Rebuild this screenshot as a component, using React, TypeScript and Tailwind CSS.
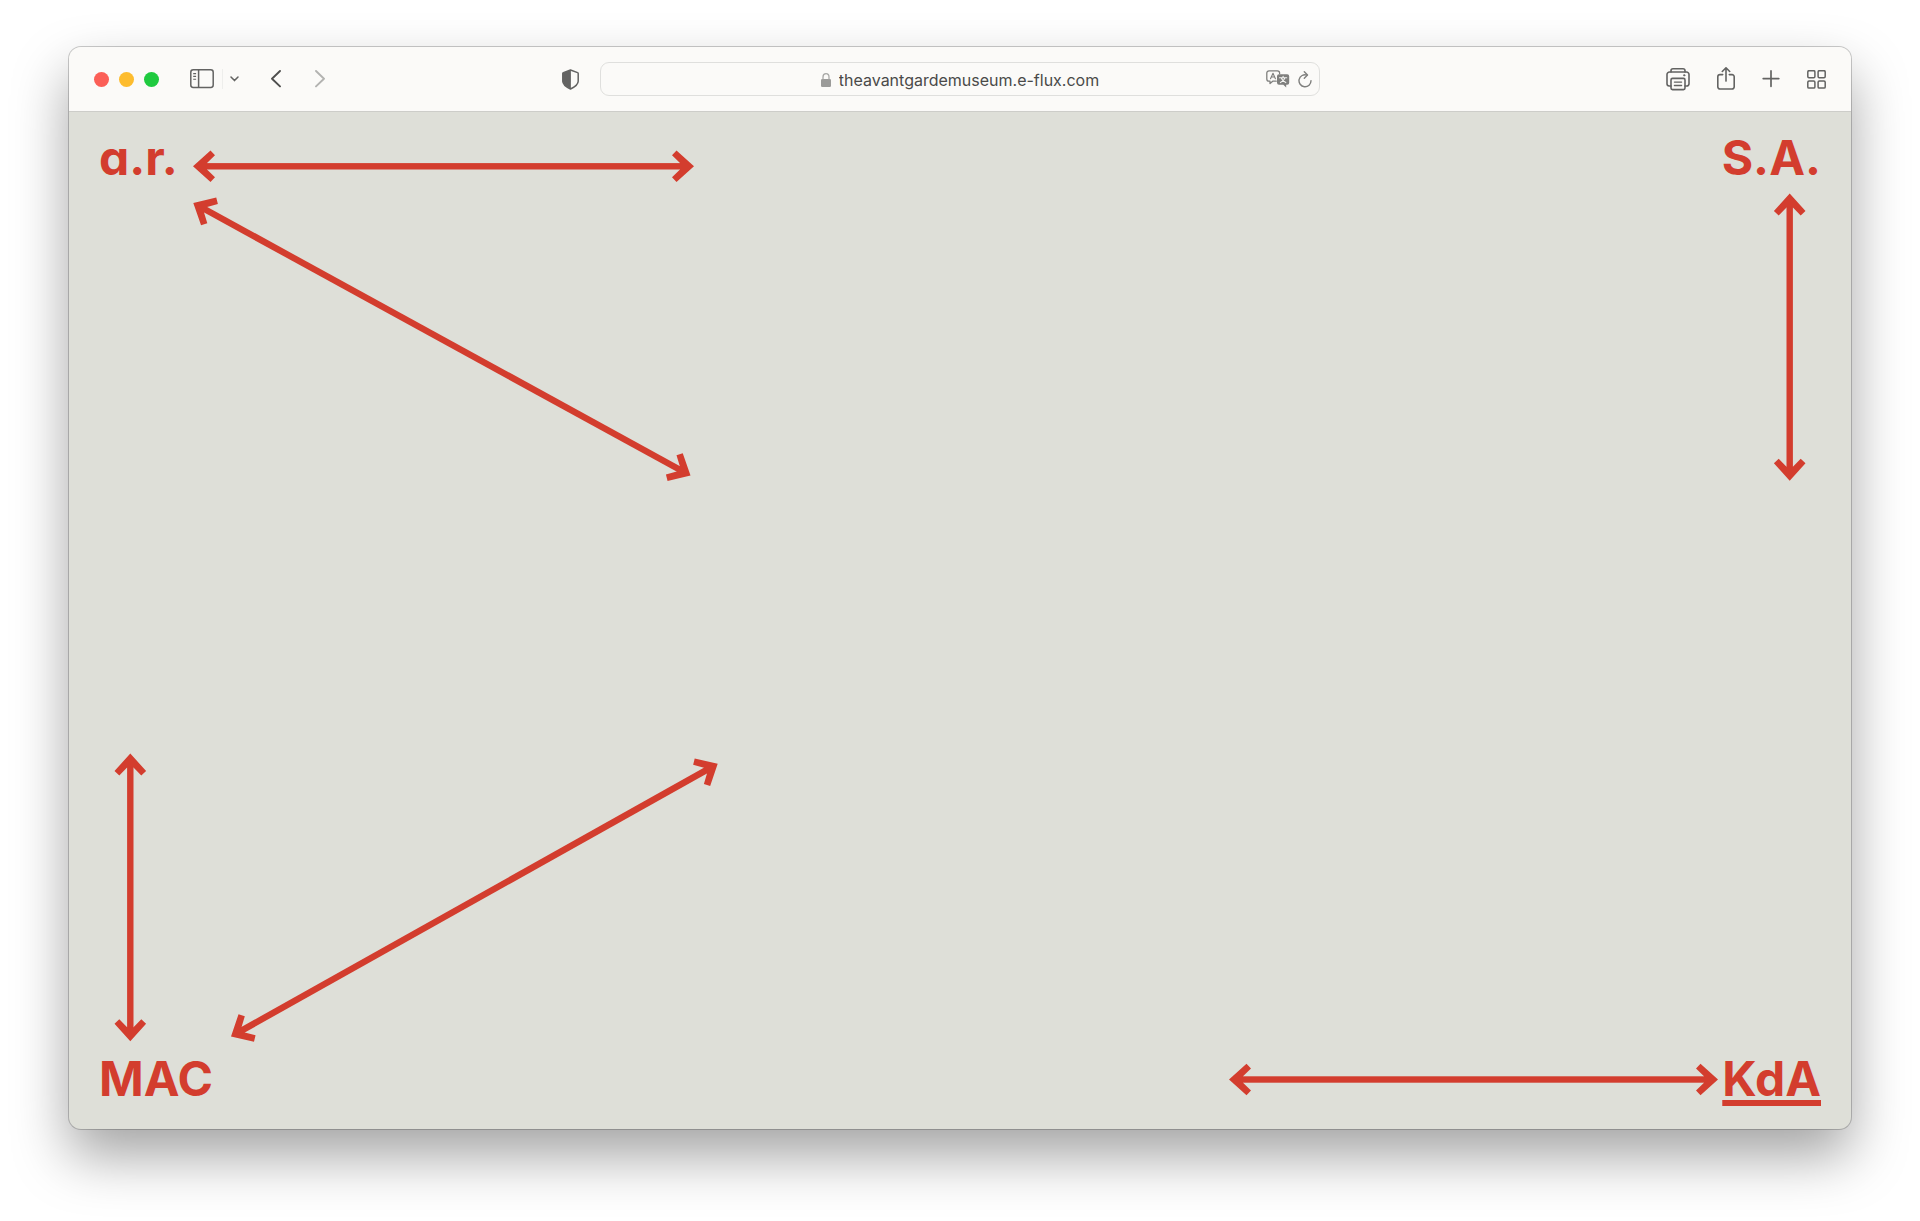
import React from 'react';

function App() {
  return (
    <div className="min-h-screen bg-white px-[69px] pt-[47px] pb-[91px] font-['Inter',sans-serif]">
      <div className="rounded-xl overflow-hidden bg-[#dedfd8] shadow-[0_0_0_1px_rgba(0,0,0,0.2),0_27px_55px_rgba(0,0,0,0.36)]">
        <Toolbar />
        <Page />
      </div>
    </div>
  );
}

function Toolbar() {
  return (
    <header className="grid grid-cols-[1fr_720px_1fr] items-center h-[65px] bg-[#fbfaf8] border-b border-[#cdcdc9] text-[#636362]">
      <div className="flex items-center pl-[25px] pr-[21px]">
        <div className="flex gap-[10px]">
          <button aria-label="Close" className="size-[15px] rounded-full bg-[#fb5f57]" />
          <button aria-label="Minimize" className="size-[15px] rounded-full bg-[#fdbc2e]" />
          <button aria-label="Zoom" className="size-[15px] rounded-full bg-[#1fca3f]" />
        </div>
        <button aria-label="Sidebar" className="ml-[31px]">
          <SidebarIcon />
        </button>
        <div className="ml-2 h-5 w-px bg-[#eeeeec]" />
        <button aria-label="Tab groups" className="ml-[7px]">
          <svg width="9" height="6" viewBox="0 0 9 6" fill="none" stroke="currentColor" strokeWidth="1.5" strokeLinecap="round" strokeLinejoin="round">
            <path d="M1 1l3.5 3.6L8 1" />
          </svg>
        </button>
        <button aria-label="Back" className="ml-8">
          <svg width="10" height="18" viewBox="0 0 10 18" fill="none" stroke="#4f4f4e" strokeWidth="1.9" strokeLinecap="round" strokeLinejoin="round">
            <path d="M9 1L1 8.7L9 16.4" />
          </svg>
        </button>
        <button aria-label="Forward" className="ml-[34px]">
          <svg width="10" height="18" viewBox="0 0 10 18" fill="none" stroke="#b3b3b1" strokeWidth="1.9" strokeLinecap="round" strokeLinejoin="round">
            <path d="M1 1L9 8.7L1 16.4" />
          </svg>
        </button>
        <button aria-label="Privacy report" className="ml-auto">
          <ShieldIcon />
        </button>
      </div>

      <div className="grid grid-cols-[1fr_auto_1fr] items-center h-[34px] rounded-[9px] border border-[#dfdfdd]">
        <div />
        <label className="flex items-center gap-2 pt-0.5">
          <LockIcon />
          <input
            type="text"
            aria-label="Address"
            defaultValue="theavantgardemuseum.e-flux.com"
            className="field-sizing-content bg-transparent text-base leading-6 text-[#4a4a49] outline-none"
          />
        </label>
        <div className="flex items-center justify-end gap-2 pr-[7px] text-[#7f7f7d]">
          <button aria-label="Translate">
            <TranslateIcon />
          </button>
          <button aria-label="Reload">
            <ReloadIcon />
          </button>
        </div>
      </div>

      <div className="flex items-center justify-end gap-[27px] pr-[25px]">
        <button aria-label="Print">
          <PrinterIcon />
        </button>
        <button aria-label="Share">
          <ShareIcon />
        </button>
        <button aria-label="New tab">
          <svg width="18" height="18" viewBox="0 0 18 18" fill="none" stroke="currentColor" strokeWidth="1.7" strokeLinecap="round">
            <path d="M9 .9v15.4M1.2 8.6h15.6" />
          </svg>
        </button>
        <button aria-label="Tab overview">
          <svg width="19" height="19" viewBox="0 0 19 19" fill="none" stroke="currentColor" strokeWidth="1.5">
            <rect x=".8" y=".7" width="7.1" height="7.1" rx="1.2" />
            <rect x="11.1" y=".7" width="7.1" height="7.1" rx="1.2" />
            <rect x=".8" y="11" width="7.1" height="7.1" rx="1.2" />
            <rect x="11.1" y="11" width="7.1" height="7.1" rx="1.2" />
          </svg>
        </button>
      </div>
    </header>
  );
}

function Page() {
  return (
    <main className="relative flex flex-col justify-between w-full aspect-[1782/1017] px-[30px] pt-4 pb-5 text-[#d33d2e] text-5xl font-bold leading-[60px]">
      {/* Arrows between the corner links */}
      <svg className="absolute inset-0 size-full pointer-events-none" viewBox="0 0 1782 1017" fill="currentColor">
        <Arrow x1={124} y1={54.3} x2={625} y2={54.3} />
        <Arrow x1={124.3} y1={91} x2={621.5} y2={363.5} />
        <Arrow x1={1720.7} y1={81.5} x2={1720.7} y2={368.7} />
        <Arrow x1={61.3} y1={641.5} x2={61.3} y2={929.3} />
        <Arrow x1={162} y1={924.5} x2={648.7} y2={651.7} />
        <Arrow x1={1160} y1={967.5} x2={1649} y2={967.5} />
      </svg>
      <nav className="flex justify-between">
        <a href="#ar" className="[font-feature-settings:'cv11']">a.r.</a>
        <a href="#sa">S.A.</a>
      </nav>
      <nav className="flex justify-between">
        <a href="#mac">MAC</a>
        <a href="#kda" className="underline decoration-[6px] underline-offset-4 [text-decoration-skip-ink:none]">KdA</a>
      </nav>
    </main>
  );
}

function Arrow({ x1, y1, x2, y2 }: { x1: number; y1: number; x2: number; y2: number }) {
  const length = Math.hypot(x2 - x1, y2 - y1);
  const angle = (Math.atan2(y2 - y1, x2 - x1) * 180) / Math.PI;
  const head = '0,0 17.5,-15.8 22,-11 14,-3.2 14,3.2 22,11 17.5,15.8';
  return (
    <g transform={`translate(${x1} ${y1}) rotate(${angle})`}>
      <rect x="10" y="-3.2" width={length - 20} height="6.4" />
      <polygon points={head} />
      <polygon points={head} transform={`translate(${length} 0) rotate(180)`} />
    </g>
  );
}

function SidebarIcon() {
  return (
    <svg width="24" height="20" viewBox="0 0 24 20" fill="none" stroke="currentColor" strokeWidth="1.5">
      <rect x=".8" y=".8" width="22.4" height="17.6" rx="2.4" />
      <path d="M8.6 .8v17.6" />
      <path d="M3.2 4.6h2.9M3.2 7.4h2.9M3.2 10.2h2.9" strokeWidth="1.1" />
    </svg>
  );
}

function ShieldIcon() {
  return (
    <svg width="17" height="21" viewBox="0 0 17 21">
      <path d="M8.5 1L15.6 3.6q.6.2.6.9v7.7c0 3.6-4 6-7.7 7.8C4.8 18.2.8 15.8.8 12.2V4.5q0-.7.6-.9z" fill="none" stroke="currentColor" strokeWidth="1.5" strokeLinejoin="round" />
      <path d="M8.9.9v19L3 16.5.8 13V4L8.5 1z" fill="currentColor" />
    </svg>
  );
}

function LockIcon() {
  return (
    <svg width="10" height="14" viewBox="0 0 10 14">
      <rect y="6" width="10" height="8" rx="1.2" fill="#9b9b99" />
      <path d="M2 6.5V3.9a3 3.2 0 0 1 6 0v2.6" fill="none" stroke="#a9a9a7" strokeWidth="1.3" />
    </svg>
  );
}

function TranslateIcon() {
  return (
    <svg width="24" height="18" viewBox="0 0 24 18" fill="none" stroke="currentColor" strokeLinecap="round" strokeLinejoin="round">
      <path d="M13.6 3.6V3a2.2 2.2 0 0 0-2.2-2.2H3A2.2 2.2 0 0 0 .8 3v6A2.2 2.2 0 0 0 3 11.2h1v2.4l2.7-2.4h3.5" strokeWidth="1.3" />
      <path d="M4.5 8.8L7 3.2l2.4 5.6M5.3 7h3.3" strokeWidth="1.1" />
      <path d="M13 4.2h8.2a2 2 0 0 1 2 2v6.6a2 2 0 0 1-2 2h-1v2.7l-2.9-2.7H13a2 2 0 0 1-2-2V6.2a2 2 0 0 1 2-2z" fill="currentColor" stroke="none" />
      <path d="M13.5 7.7h7.2M17.1 6.2v1.5M14.4 12.6c2.4-1 3.8-2.5 4.6-4.7M15.3 8c.8 2.2 2.2 3.7 4.5 4.6" stroke="#f4f4f2" strokeWidth="1.1" />
    </svg>
  );
}

function ReloadIcon() {
  return (
    <svg width="14" height="17" viewBox="0 0 14 17" fill="none" stroke="currentColor" strokeWidth="1.4" strokeLinecap="round" strokeLinejoin="round">
      <path d="M9 4.1A6 6 0 1 0 13 9.6" />
      <path d="M6.3 .8L9.5 4L6.3 7.2" />
    </svg>
  );
}

function PrinterIcon() {
  return (
    <svg width="24" height="23" viewBox="0 0 24 23" fill="none" stroke="currentColor" strokeWidth="1.6" strokeLinecap="round" strokeLinejoin="round">
      <path d="M5 3.9V2.8a2 2 0 0 1 2-2h10a2 2 0 0 1 2 2v1.1" />
      <path d="M5 18H3.2A2.2 2.2 0 0 1 1 15.8V6.6A2.6 2.6 0 0 1 3.6 4h16.8A2.6 2.6 0 0 1 23 6.6v9.2a2.2 2.2 0 0 1-2.2 2.2H19" />
      <rect x="5" y="10.4" width="14" height="11.2" rx="1.5" />
      <path d="M8.4 14.1h7.2M8.4 17.5h7.2" strokeWidth="1.3" />
      <circle cx="18.2" cy="7.3" r=".7" fill="currentColor" strokeWidth=".8" />
    </svg>
  );
}

function ShareIcon() {
  return (
    <svg width="18" height="24" viewBox="0 0 18 24" fill="none" stroke="currentColor" strokeWidth="1.6" strokeLinecap="round" strokeLinejoin="round">
      <path d="M5.7 7.6H3A2.2 2.2 0 0 0 .8 9.8v10A2.2 2.2 0 0 0 3 22h12a2.2 2.2 0 0 0 2.2-2.2v-10A2.2 2.2 0 0 0 15 7.6h-2.7" />
      <path d="M9 14.1V.9M5.3 4.5L9 .8l3.7 3.7" />
    </svg>
  );
}

export default App;
